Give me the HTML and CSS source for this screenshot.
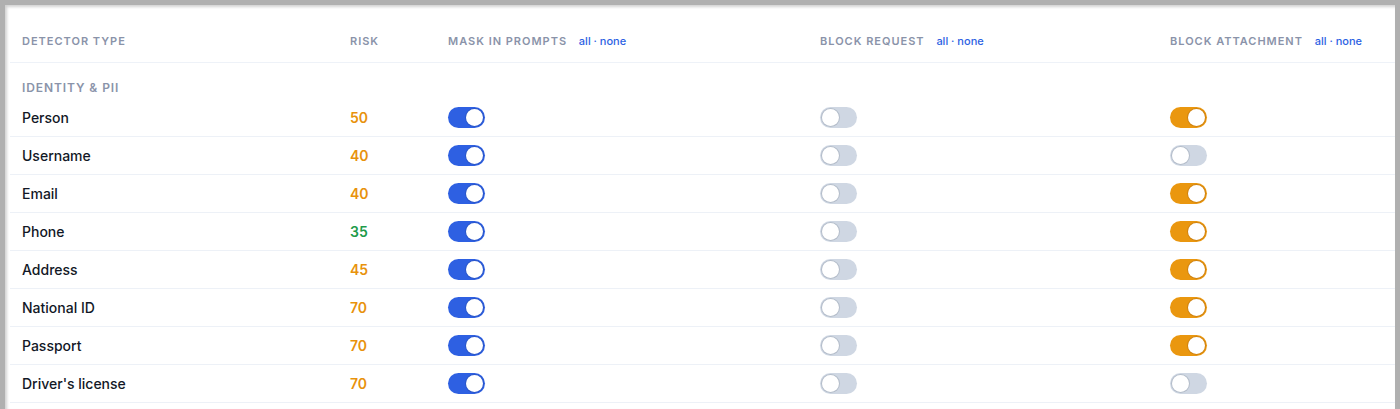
FILE: index.html
```html
<!DOCTYPE html>
<html lang="en">
<head>
<meta charset="utf-8">
<title>Detectors</title>
<link rel="stylesheet" href="styles.css">
</head>
<body>
<div class="frame">
  <div class="card">
    <div class="table">
      <div class="row head">
        <div class="cell">Detector type</div>
        <div class="cell">Risk</div>
        <div class="cell">Mask in prompts <span class="links">all · none</span></div>
        <div class="cell">Block request <span class="links">all · none</span></div>
        <div class="cell">Block attachment <span class="links">all · none</span></div>
      </div>
      <div class="section">Identity &amp; PII</div>

      <div class="row">
        <div class="cell name">Person</div>
        <div class="cell risk med">50</div>
        <div class="cell"><span class="tg on blue"></span></div>
        <div class="cell"><span class="tg"></span></div>
        <div class="cell"><span class="tg on orange"></span></div>
      </div>
      <div class="row">
        <div class="cell name">Username</div>
        <div class="cell risk med">40</div>
        <div class="cell"><span class="tg on blue"></span></div>
        <div class="cell"><span class="tg"></span></div>
        <div class="cell"><span class="tg"></span></div>
      </div>
      <div class="row">
        <div class="cell name">Email</div>
        <div class="cell risk med">40</div>
        <div class="cell"><span class="tg on blue"></span></div>
        <div class="cell"><span class="tg"></span></div>
        <div class="cell"><span class="tg on orange"></span></div>
      </div>
      <div class="row">
        <div class="cell name">Phone</div>
        <div class="cell risk low">35</div>
        <div class="cell"><span class="tg on blue"></span></div>
        <div class="cell"><span class="tg"></span></div>
        <div class="cell"><span class="tg on orange"></span></div>
      </div>
      <div class="row">
        <div class="cell name">Address</div>
        <div class="cell risk med">45</div>
        <div class="cell"><span class="tg on blue"></span></div>
        <div class="cell"><span class="tg"></span></div>
        <div class="cell"><span class="tg on orange"></span></div>
      </div>
      <div class="row">
        <div class="cell name">National ID</div>
        <div class="cell risk med">70</div>
        <div class="cell"><span class="tg on blue"></span></div>
        <div class="cell"><span class="tg"></span></div>
        <div class="cell"><span class="tg on orange"></span></div>
      </div>
      <div class="row">
        <div class="cell name">Passport</div>
        <div class="cell risk med">70</div>
        <div class="cell"><span class="tg on blue"></span></div>
        <div class="cell"><span class="tg"></span></div>
        <div class="cell"><span class="tg on orange"></span></div>
      </div>
      <div class="row">
        <div class="cell name">Driver's license</div>
        <div class="cell risk med">70</div>
        <div class="cell"><span class="tg on blue"></span></div>
        <div class="cell"><span class="tg"></span></div>
        <div class="cell"><span class="tg"></span></div>
      </div>
    </div>
  </div>
</div>
</body>
</html>
```

FILE: styles.css
```css
* { box-sizing: border-box; }
html, body { margin: 0; padding: 0; }
body {
  width: 1400px;
  height: 409px;
  overflow: hidden;
  font-family: Inter, "Liberation Sans", Arial, sans-serif;
  background: #ffffff;
}
.frame {
  height: 409px;
  padding: 5px 5px 0 5px;
  background: #b0b0b0;
}
.card {
  height: 404px;
  background: #ffffff;
  box-shadow: inset 2px 2px 3px rgba(0,0,0,0.18);
  padding-left: 5px;
}
.table { width: 100%; }
.row {
  display: grid;
  grid-template-columns: 328px 98px 372px 350px 1fr;
  align-items: center;
  height: 38px;
  border-bottom: 1px solid #edf1f7;
}
.cell { padding: 0 12px; white-space: nowrap; }
.head {
  height: 58px;
  align-items: end;
  padding-bottom: 14px;
  border-bottom: 1px solid #eef2f8;
}
.head .cell {
  font-size: 11px;
  line-height: 13px;
  font-weight: 600;
  letter-spacing: 0.09em;
  text-transform: uppercase;
  color: #8a93a9;
}
.head .links {
  margin-left: 8px;
  text-transform: none;
  letter-spacing: 0;
  font-weight: 500;
  color: #2d62e3;
}
.section {
  height: 36px;
  padding: 18px 12px 5px;
  font-size: 12px;
  line-height: 13px;
  font-weight: 600;
  letter-spacing: 0.075em;
  text-transform: uppercase;
  color: #8a93a9;
}
.name {
  font-size: 14px;
  font-weight: 500;
  color: #121826;
}
.risk {
  font-size: 14px;
  font-weight: 600;
}
.risk.med { color: #e8920c; }
.risk.low { color: #1e9b4b; }
.tg {
  display: block;
  position: relative;
  width: 37px;
  height: 21px;
  border-radius: 11px;
  background: #cfd7e3;
}
.tg::after {
  content: "";
  position: absolute;
  top: 2px;
  left: 2px;
  width: 17px;
  height: 17px;
  border-radius: 50%;
  background: #ffffff;
  box-shadow: 0 0 0 1px #b4bdca;
}
.tg.on::after { left: 18px; }
.tg.blue { background: #2e60e2; }
.tg.blue::after { box-shadow: 0 0 0 1px #2a56c9; }
.tg.orange { background: #ea970f; }
.tg.orange::after { box-shadow: 0 0 0 1px #d08310; }
```
